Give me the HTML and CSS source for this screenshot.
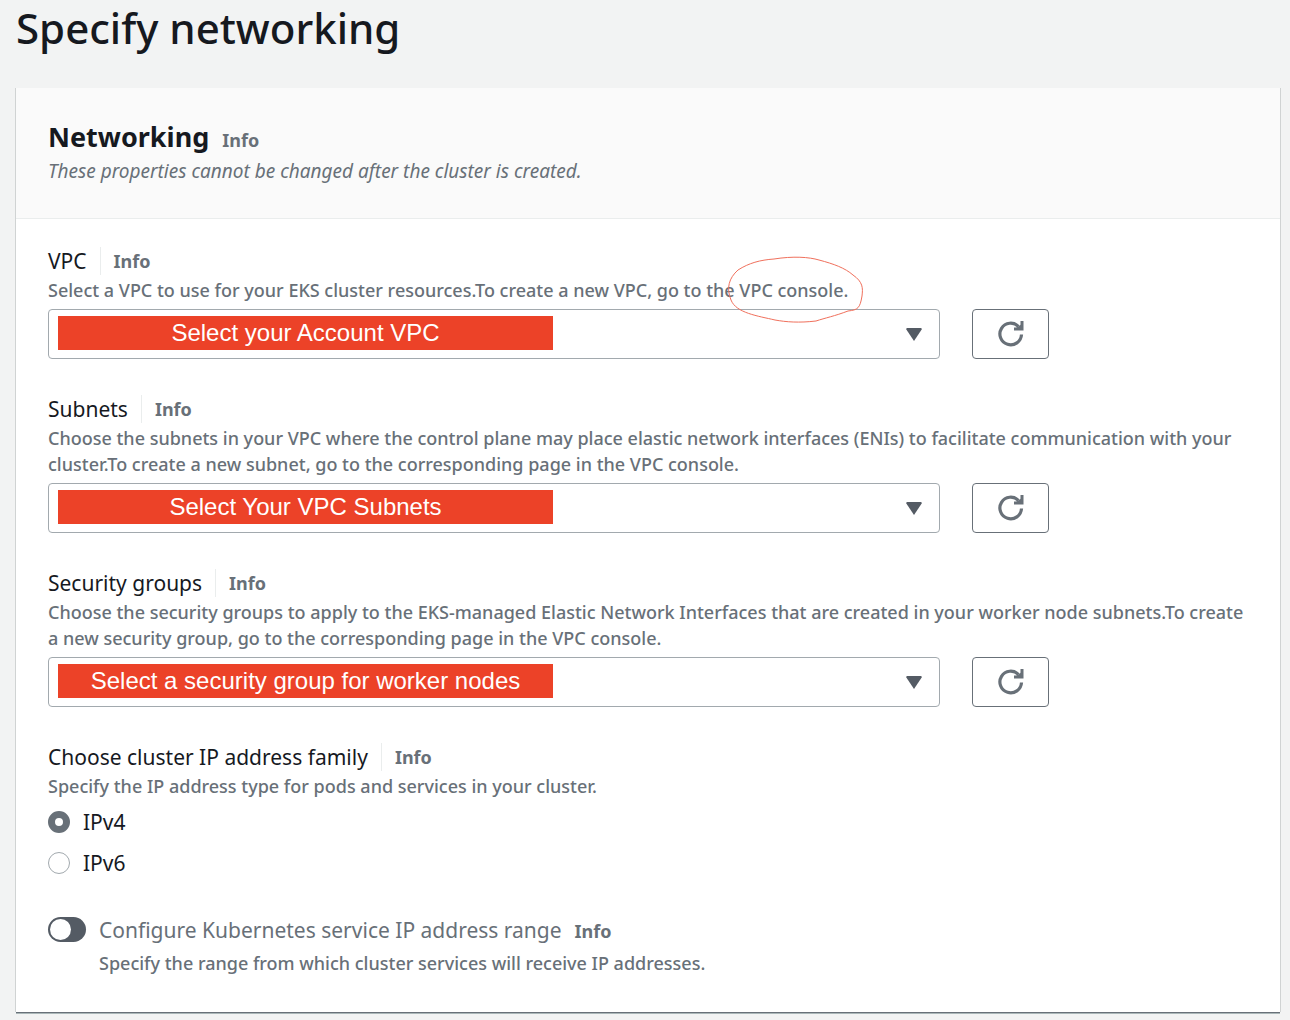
FILE: index.html
```html
<!DOCTYPE html>
<html lang="en">
<head>
<meta charset="utf-8">
<meta name="viewport" content="width=device-width, initial-scale=1">
<title>Specify networking</title>
<link rel="stylesheet" href="styles.css">
</head>
<body>
<svg class="sprite" aria-hidden="true">
  <symbol id="refresh" viewBox="0 0 26 26">
    <path d="M23.500 13.500A10.800 10.800 0 1 1 20.500 5.500" fill="none" stroke="currentColor" stroke-width="3.200"/>
    <path d="M24 0V8H16" fill="none" stroke="currentColor" stroke-width="3"/>
    <path d="M18 7h6V3z" fill="currentColor"/>
  </symbol>
</svg>
<main class="page">
  <h1 class="page-title">Specify networking</h1>
  <form class="card">
    <header class="card-header">
      <div class="heading-row">
        <h2 class="card-title">Networking</h2>
        <a class="info" href="#">Info</a>
      </div>
      <p class="card-note">These properties cannot be changed after the cluster is created.</p>
    </header>
    <div class="card-body">
      <section class="field">
        <div class="label-row">
          <label class="label" for="vpc">VPC</label>
          <a class="info" href="#">Info</a>
        </div>
        <p class="description">Select a VPC to use for your EKS cluster resources.To create a new VPC, go to the <span class="circled">VPC console.<svg class="circle-mark" viewBox="0 0 138 68" aria-hidden="true"><path d="M4 44C-1 32 2 22 11 14C22 7 33 4 47 3C66 0 82 1 92 4C107 8 118 12 126 19C136 26 136 32 135 40C133 52 131 54 121 55C108 60 98 62 89 65C72 67 59 66 48 64C31 60 9 57 4 44Z"/></svg></span></p>
        <div class="control-row">
          <div class="select-box">
            <select class="select" id="vpc"><option></option></select>
            <span class="callout">Select your Account VPC</span>
            <svg class="arrow" viewBox="0 0 16 13" aria-hidden="true"><path d="M1 0H15L16 1L8 13L0 1Z"/></svg>
          </div>
          <button class="refresh" type="button" aria-label="Refresh VPCs"><svg class="refresh-icon"><use href="#refresh"/></svg></button>
        </div>
      </section>
      <section class="field">
        <div class="label-row">
          <label class="label" for="subnets">Subnets</label>
          <a class="info" href="#">Info</a>
        </div>
        <p class="description">Choose the subnets in your VPC where the control plane may place elastic network interfaces (ENIs) to facilitate communication with your cluster.To create a new subnet, go to the corresponding page in the VPC console.</p>
        <div class="control-row">
          <div class="select-box">
            <select class="select" id="subnets"><option></option></select>
            <span class="callout">Select Your VPC Subnets</span>
            <svg class="arrow" viewBox="0 0 16 13" aria-hidden="true"><path d="M1 0H15L16 1L8 13L0 1Z"/></svg>
          </div>
          <button class="refresh" type="button" aria-label="Refresh subnets"><svg class="refresh-icon"><use href="#refresh"/></svg></button>
        </div>
      </section>
      <section class="field">
        <div class="label-row">
          <label class="label" for="groups">Security groups</label>
          <a class="info" href="#">Info</a>
        </div>
        <p class="description">Choose the security groups to apply to the EKS-managed Elastic Network Interfaces that are created in your worker node subnets.To create a&nbsp;new security group, go to the corresponding page in the VPC console.</p>
        <div class="control-row">
          <div class="select-box">
            <select class="select" id="groups"><option></option></select>
            <span class="callout">Select a security group for worker nodes</span>
            <svg class="arrow" viewBox="0 0 16 13" aria-hidden="true"><path d="M1 0H15L16 1L8 13L0 1Z"/></svg>
          </div>
          <button class="refresh" type="button" aria-label="Refresh security groups"><svg class="refresh-icon"><use href="#refresh"/></svg></button>
        </div>
      </section>
      <section class="field" role="radiogroup" aria-labelledby="family">
        <div class="label-row">
          <span class="label" id="family">Choose cluster IP address family</span>
          <a class="info" href="#">Info</a>
        </div>
        <p class="description">Specify the IP address type for pods and services in your cluster.</p>
        <div class="radios">
          <label class="option"><input class="radio" type="radio" name="family" checked>IPv4</label>
          <label class="option"><input class="radio" type="radio" name="family">IPv6</label>
        </div>
      </section>
      <section class="toggle-field">
        <input class="toggle" type="checkbox" role="switch" id="range">
        <div class="toggle-text">
          <div class="heading-row">
            <label class="toggle-label" for="range">Configure Kubernetes service IP address range</label>
            <a class="info" href="#">Info</a>
          </div>
          <p class="description">Specify the range from which cluster services will receive IP addresses.</p>
        </div>
      </section>
    </div>
  </form>
</main>
</body>
</html>
```

FILE: styles.css
```css
* { box-sizing: border-box; }

body {
  margin: 0;
  background: #f2f3f3;
  color: #16191f;
  font-family: "Noto Sans", "Open Sans", sans-serif;
  font-size: 18px;
  line-height: 26px;
}

h1, h2, p { margin: 0; }

.sprite { display: none; }

.page { padding: 0 10px 6px 16px; }

.page-title {
  padding-bottom: 32px;
  font-size: 42px;
  font-weight: 500;
  line-height: 56px;
}

.card {
  background: #fff;
  box-shadow: 1px 0 0 #d0d3d3, -1px 0 0 #d0d3d3, 0 1px 0 #687078, 0 2px 0 #aab7b8;
}

.card-header {
  padding: 31px 32px;
  border-bottom: 1px solid #eaeded;
  background: #fafafa;
}

.heading-row { display: flex; align-items: baseline; gap: 13px; }

.card-title { font-size: 27px; font-weight: 700; line-height: 36px; }

.card-note { color: #687078; font-size: 19px; font-style: italic; line-height: 32px; }

.info {
  color: #687078;
  font-size: 18px;
  font-weight: 700;
  text-decoration: none;
}

.card-body { padding: 28px 32px 36px; }

.field { margin-bottom: 36px; }

.label-row { display: flex; align-items: center; margin-bottom: 2px; }

.label { font-size: 21px; line-height: 28px; }

.label-row .info {
  margin-left: 13px;
  padding-left: 13px;
  border-left: 1px solid #eaeded;
  line-height: 28px;
}

.description { color: #687078; font-weight: 500; }

.circled { position: relative; }

.circle-mark {
  position: absolute;
  top: -22px;
  left: -12px;
  width: 138px;
  height: 68px;
  fill: none;
  stroke: #f0705c;
  stroke-width: 1;
  pointer-events: none;
  z-index: 1;
}

.control-row {
  display: flex;
  gap: 32px;
  max-width: 1001px;
  margin-top: 6px;
}

.select-box { position: relative; flex: 1; }

.select {
  display: block;
  width: 100%;
  height: 50px;
  appearance: none;
  border: 1px solid #a2a9ae;
  border-radius: 4px;
  background: #fff;
  font: inherit;
}

.callout {
  position: absolute;
  top: 7px;
  left: 10px;
  width: 495px;
  background: #ec4228;
  color: #fff;
  font-family: "Liberation Sans", Arial, sans-serif;
  font-size: 24px;
  line-height: 34px;
  text-align: center;
  pointer-events: none;
}

.arrow {
  position: absolute;
  top: 19px;
  right: 18px;
  width: 16px;
  height: 13px;
  fill: #545b64;
  pointer-events: none;
}

.refresh {
  display: grid;
  place-items: center;
  width: 77px;
  height: 50px;
  padding: 0;
  border: 1px solid #687078;
  border-radius: 4px;
  background: #fff;
  color: #687078;
}

.refresh-icon { width: 26px; height: 26px; }

.radios { display: grid; gap: 13px; margin-top: 9px; }

.option {
  display: flex;
  align-items: center;
  gap: 13px;
  font-size: 21px;
  line-height: 28px;
}

.radio {
  width: 22px;
  height: 22px;
  margin: 0;
  appearance: none;
  border: 1px solid #a2a9ae;
  border-radius: 50%;
  background: #fff;
}

.radio:checked { border: 7px solid #687078; }

.toggle-field { display: flex; gap: 13px; padding-top: 3px; }

.toggle {
  width: 38px;
  height: 25px;
  margin: 1px 0 0;
  padding: 2px;
  appearance: none;
  border-radius: 13px;
  background: #545b64;
}

.toggle::before {
  content: "";
  display: block;
  width: 21px;
  height: 21px;
  border-radius: 50%;
  background: #fff;
}

.toggle:checked::before { margin-left: auto; }

.toggle-label { color: #687078; font-size: 21px; line-height: 28px; }

.toggle-text .description { margin-top: 6px; }
```
